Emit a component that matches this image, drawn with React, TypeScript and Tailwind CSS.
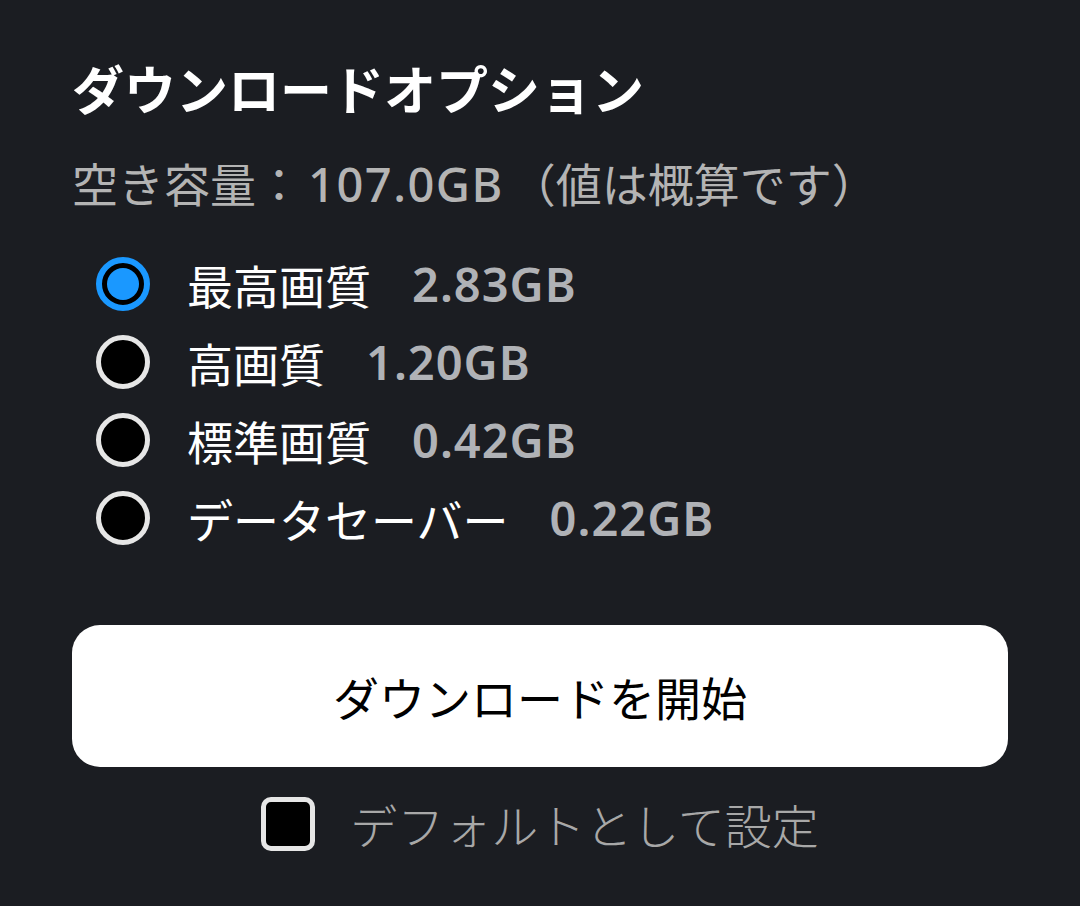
import { useState } from "react";

// ダウンロード画質の選択肢
const qualities = [
    { id: "best", label: "最高画質", size: "2.83GB" },
    { id: "high", label: "高画質", size: "1.20GB" },
    { id: "standard", label: "標準画質", size: "0.42GB" },
    { id: "saver", label: "データセーバー", size: "0.22GB" },
];

const latin = { fontFamily: '"Noto Sans", "Noto Sans CJK JP", sans-serif' };

export default function App() {
    const [selected, setSelected] = useState("best");
    const [isDefault, setIsDefault] = useState(false);

    return (
        <div
            className="min-h-screen bg-[#1b1d22] px-[72px] pt-[57px] text-white"
            style={{ fontFamily: '"Noto Sans CJK JP", "Noto Sans", sans-serif' }}
        >
            {/* Header */}
            <h1 className="text-[52px] leading-[62px] font-bold">ダウンロードオプション</h1>
            <p className="mt-[35px] text-[46px] leading-[56px] text-[#b4b4b4]">
                空き容量：
                <span className="ml-[6px] mr-[6px] font-medium text-[47px] tracking-[1.5px]" style={latin}>107.0GB</span>
                （値は概算です）
            </p>

            {/* Quality options */}
            <div className="mt-[33px] flex flex-col">
                {qualities.map((q) => (
                    <button
                        key={q.id}
                        onClick={() => setSelected(q.id)}
                        className="flex items-center h-[78px] pl-[24px] text-left"
                    >
                        {selected === q.id ? (
                            <span className="w-[54px] h-[54px] rounded-full border-[6px] border-[#1a98ff] bg-black p-[5px] shrink-0">
                                <span className="block w-full h-full rounded-full bg-[#1a98ff]" />
                            </span>
                        ) : (
                            <span className="w-[54px] h-[54px] rounded-full border-[5px] border-[#e6e6e6] bg-black shrink-0" />
                        )}
                        <span className="ml-[37px] text-[46px] leading-[56px] text-white">{q.label}</span>
                        <span
                            className="ml-[41px] text-[47px] leading-[56px] font-semibold tracking-[1px] text-[#b0b2b6]"
                            style={latin}
                        >
                            {q.size}
                        </span>
                    </button>
                ))}
            </div>

            {/* Start button */}
            <button className="mt-[68px] w-full h-[142px] rounded-[28px] bg-white text-black text-[46px] leading-[56px]">
                ダウンロードを開始
            </button>

            {/* Default checkbox */}
            <div className="mt-[29px] flex justify-center">
                <button onClick={() => setIsDefault(!isDefault)} className="flex items-center gap-[35px]">
                    <span className="w-[54px] h-[54px] rounded-[10px] border-[5px] border-[#e6e6e6] bg-black" />
                    <span className="text-[47px] leading-[56px] font-light text-[#a8a8a8]">デフォルトとして設定</span>
                </button>
            </div>
        </div>
    );
}
